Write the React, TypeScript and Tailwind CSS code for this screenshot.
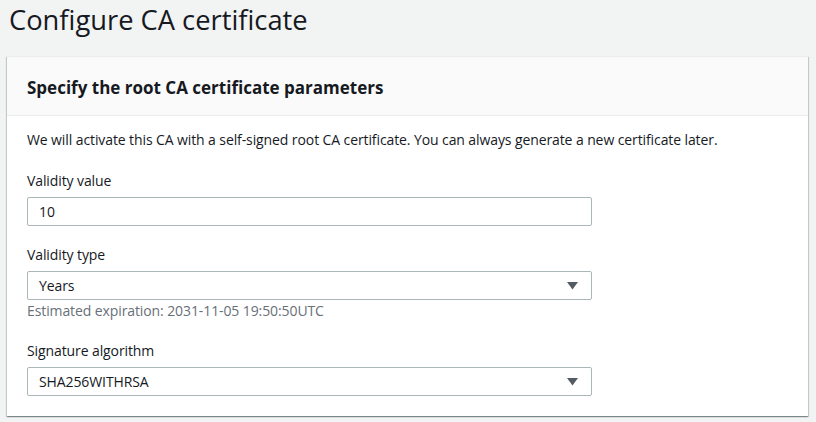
import React from "react";

const font = { fontFamily: "'Open Sans', Lato, sans-serif" };

function Caret() {
  return (
    <svg width="11" height="8" viewBox="0 0 11 8" className="shrink-0">
      <polygon points="0,0 11,0 5.5,7.5" fill="#545b64" />
    </svg>
  );
}

function Field({ label, value, select }: { label: string; value: string; select?: boolean }) {
  return (
    <div className="flex flex-col">
      <div className="text-[14px] tracking-[-0.1px] leading-[20px] text-[#16191f]">{label}</div>
      <div className="mt-[6px] h-[29px] w-[565px] border border-[#aab7b8] rounded-[2px] bg-white flex items-center justify-between pl-[11px] pr-[13px]">
        <span className="text-[14px] tracking-[-0.1px] text-[#16191f]">{value}</span>
        {select ? <Caret /> : null}
      </div>
    </div>
  );
}

export default function App() {
  return (
    <div className="w-[816px] h-[422px] bg-[#f2f3f3] overflow-hidden" style={font}>
      <h1 className="pl-[9px] pt-[2px] text-[27.3px] leading-[36px] font-normal text-[#16191f]">
        Configure CA certificate
      </h1>
      <div className="mt-[18px] ml-[7px] mr-[8px] bg-white shadow-[0_1px_1px_0_rgba(0,28,36,0.3),1px_1px_1px_0_rgba(0,28,36,0.15),-1px_1px_1px_0_rgba(0,28,36,0.15)] border-t border-[#eaeded]">
        <div className="h-[59px] bg-[#fafafa] border-b border-[#eaeded] flex items-center pl-[20px] pt-[4px]">
          <h2 className="text-[17px] font-bold text-[#16191f]">Specify the root CA certificate parameters</h2>
        </div>
        <div className="pl-[20px] pt-[14px] pb-[20px]">
          <p className="text-[14px] tracking-[-0.1px] leading-[20px] text-[#16191f]">
            We will activate this CA with a self-signed root CA certificate. You can always generate a new certificate later.
          </p>
          <div className="mt-[21px]">
            <Field label="Validity value" value="10" />
          </div>
          <div className="mt-[19px]">
            <Field label="Validity type" value="Years" select />
            <div className="mt-[1px] text-[14px] tracking-[-0.1px] leading-[20px] text-[#687078]">Estimated expiration: 2031-11-05 19:50:50UTC</div>
          </div>
          <div className="mt-[20px]">
            <Field label="Signature algorithm" value="SHA256WITHRSA" select />
          </div>
        </div>
      </div>
    </div>
  );
}
